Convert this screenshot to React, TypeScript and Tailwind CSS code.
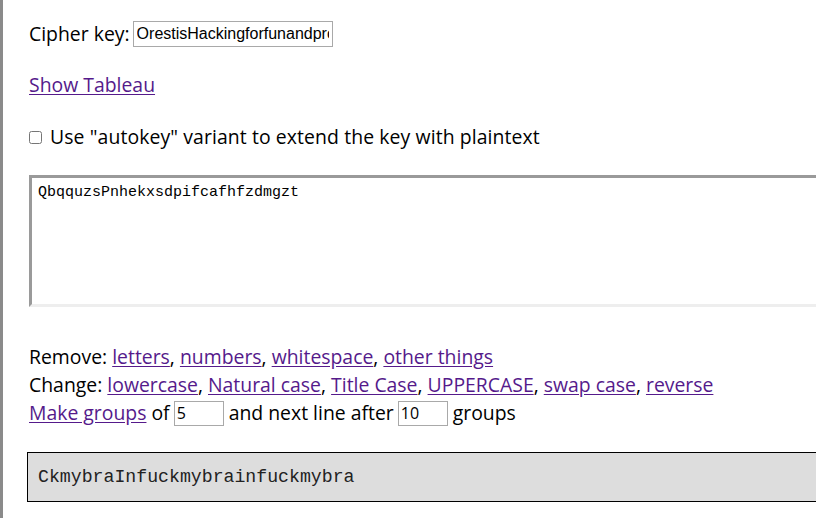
import React from 'react';

// Vigenère tool panel: key, autokey toggle, input text, helpers, output
const linkCls = 'text-[#551A8B] underline underline-offset-2';

const App: React.FC = () => {
    return (
        <div className="h-[518px] w-[816px] overflow-hidden border-l-[3px] border-[#8a8a8a] bg-white pl-[26px] text-[19.4px] leading-[28px] text-black [font-family:'Open_Sans',sans-serif]">
            {/* Cipher key */}
            <div className="mt-[21px] flex h-[26px] items-center">
                <span>Cipher key:</span>
                <input
                    type="text"
                    defaultValue="OrestisHackingforfunandprofit"
                    className="ml-[3px] h-[26px] w-[200px] border border-[#a9a9a9] px-[3px] text-[16px] outline-none [font-family:'Liberation_Sans',Arial,sans-serif]"
                />
            </div>

            <div className="mt-[24px]">
                <a href="#" className={linkCls}>Show Tableau</a>
            </div>

            <label className="mt-[24px] flex items-center">
                <input type="checkbox" className="h-[13px] w-[13px]" />
                <span className="ml-[8px] tracking-[0.1px]">Use "autokey" variant to extend the key with plaintext</span>
            </label>

            {/* Input text */}
            <textarea
                defaultValue="QbqquzsPnhekxsdpifcafhfzdmgzt"
                className="mt-[24px] block h-[132px] w-[820px] resize-none border-[3px] border-b-[#eeeeee] border-l-[#9a9a9a] border-r-[#eeeeee] border-t-[#9a9a9a] px-[6px] pb-[5px] pt-[6px] text-[15px] leading-[18px] outline-none [font-family:'Liberation_Mono',monospace]"
            />

            {/* Helpers */}
            <div className="mt-[36px]">
                Remove: <a href="#" className={linkCls}>letters</a>, <a href="#" className={linkCls}>numbers</a>,{' '}
                <a href="#" className={linkCls}>whitespace</a>, <a href="#" className={linkCls}>other things</a>
            </div>
            <div>
                Change: <a href="#" className={linkCls}>lowercase</a>, <a href="#" className={linkCls}>Natural case</a>,{' '}
                <a href="#" className={linkCls}>Title Case</a>, <a href="#" className={linkCls}>UPPERCASE</a>,{' '}
                <a href="#" className={linkCls}>swap case</a>, <a href="#" className={linkCls}>reverse</a>
            </div>
            <div className="flex items-center">
                <a href="#" className={linkCls}>Make groups</a>
                <span className="ml-[5px]">of</span>
                <input
                    type="text"
                    defaultValue="5"
                    className="ml-[4px] h-[25px] w-[50px] border border-[#a9a9a9] px-[2px] text-[16px] outline-none"
                />
                <span className="ml-[5px]">and next line after</span>
                <input
                    type="text"
                    defaultValue="10"
                    className="ml-[4px] h-[25px] w-[50px] border border-[#a9a9a9] px-[2px] text-[16px] outline-none"
                />
                <span className="ml-[5px]">groups</span>
            </div>

            {/* Output */}
            <div className="ml-[-2px] mt-[25px] flex h-[50px] w-[820px] items-center border border-black bg-[#dddddd] px-[10px] text-[18.2px] text-[#222] [font-family:'Liberation_Mono',monospace]">
                CkmybraInfuckmybrainfuckmybra
            </div>
        </div>
    );
};

export default App;
